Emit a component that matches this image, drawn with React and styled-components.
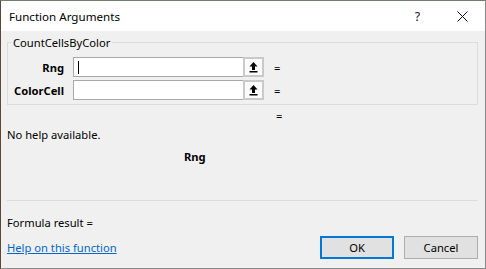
import React from "react";
import styled, { createGlobalStyle } from "styled-components";

const GlobalStyle = createGlobalStyle`
  html, body {
    margin: 0;
    padding: 0;
    background: #ffffff;
  }
  body {
    font-family: "Noto Sans", "Open Sans", sans-serif;
    font-size: 11.2px;
    color: #000000;
  }
`;

const Window = styled.div`
  width: 486px;
  height: 269px;
  box-sizing: border-box;
  border: 1px solid #8a8a8a;
  border-left-color: #5c4636;
  border-top-color: #6f7f6f;
  display: flex;
  flex-direction: column;
  background: #f0f0f0;
  overflow: hidden;
`;

const TitleBar = styled.div`
  height: 30px;
  flex: none;
  background: #ffffff;
  display: flex;
  align-items: center;
  padding-left: 8px;
`;

const Title = styled.div`
  flex: 1;
  font-size: 11.6px;
  color: #000;
`;

const TitleButton = styled.div`
  width: 45px;
  height: 30px;
  display: flex;
  align-items: center;
  justify-content: center;
  font-size: 12.5px;
  color: #222;
`;

const Body = styled.div`
  flex: 1;
  display: flex;
  flex-direction: column;
  padding: 4px 7px 0 6px;
`;

const Group = styled.fieldset`
  margin: 0;
  padding: 7px 0 4px 0;
  border: 1px solid #dcdcdc;
  display: flex;
  flex-direction: column;
  gap: 3px;
`;

const Legend = styled.legend`
  padding: 0 2px;
  margin-left: 3px;
`;

const ArgRow = styled.div`
  display: flex;
  align-items: center;
  height: 20px;
`;

const ArgLabel = styled.label`
  width: 56px;
  text-align: right;
  font-weight: bold;
  margin-right: 9px;
`;

const Field = styled.div`
  width: 170px;
  height: 20px;
  box-sizing: border-box;
  border: 1px solid #a8a8a8;
  border-right: none;
  background: #ffffff;
  display: flex;
  align-items: center;
  padding-left: 4px;
`;

const Caret = styled.span`
  width: 1px;
  height: 13px;
  background: #000;
`;

const CollapseButton = styled.div`
  width: 21px;
  height: 20px;
  box-sizing: border-box;
  border: 2px solid #c9c9c9;
  background: #fbfbfb;
  display: flex;
  align-items: center;
  justify-content: center;
`;

const Equals = styled.span`
  margin-left: ${(p) => p.$offset || 10}px;
`;

const ResultLine = styled.div`
  height: 16px;
  display: flex;
  align-items: center;
  padding-left: ${(p) => p.$indent}px;
  margin-top: ${(p) => p.$top}px;
  font-weight: ${(p) => (p.$bold ? "bold" : "normal")};
`;

const Separator = styled.div`
  height: 1px;
  background: #dcdcdc;
  margin-top: 36px;
`;

const Footer = styled.div`
  display: flex;
  flex-direction: column;
  padding-top: 14px;
`;

const BottomRow = styled.div`
  display: flex;
  align-items: center;
  margin-top: 6px;
`;

const HelpLink = styled.a`
  flex: 1;
  color: #0066cc;
  text-decoration: underline;
  cursor: pointer;
`;

const DialogButton = styled.button`
  width: 74px;
  height: 23px;
  box-sizing: border-box;
  margin-left: ${(p) => p.$gap || 0}px;
  border: ${(p) => (p.$default ? "2px solid #0078d7" : "1px solid #adadad")};
  background: #e1e1e1;
  font-family: inherit;
  font-size: 11.2px;
  color: #000;
  padding: 0;
`;

const UpArrow = () => (
  <svg width="11" height="12" viewBox="0 0 11 12">
    <path d="M5.5 1 L9.5 5.5 L7 5.5 L7 9 L4 9 L4 5.5 L1.5 5.5 Z" fill="#000" />
    <rect x="1.5" y="10" width="8" height="1.5" fill="#000" />
  </svg>
);

const CloseIcon = () => (
  <svg width="11" height="11" viewBox="0 0 11 11">
    <path d="M0.5 0.5 L10.5 10.5 M10.5 0.5 L0.5 10.5" stroke="#111" strokeWidth="1" />
  </svg>
);

const args = [
  { name: "Rng", focused: true },
  { name: "ColorCell", focused: false },
];

export default function App() {
  return (
    <>
      <GlobalStyle />
      <Window>
        <TitleBar>
          <Title>Function Arguments</Title>
          <TitleButton>?</TitleButton>
          <TitleButton>
            <CloseIcon />
          </TitleButton>
        </TitleBar>
        <Body>
          <Group>
            <Legend>CountCellsByColor</Legend>
            {args.map((a) => (
              <ArgRow key={a.name}>
                <ArgLabel>{a.name}</ArgLabel>
                <Field>{a.focused && <Caret />}</Field>
                <CollapseButton>
                  <UpArrow />
                </CollapseButton>
                <Equals>=</Equals>
              </ArgRow>
            ))}
          </Group>
          <ResultLine $indent={269} $top={2}>=</ResultLine>
          <ResultLine $indent={0} $top={3}>No help available.</ResultLine>
          <ResultLine $indent={177} $top={6} $bold>Rng</ResultLine>
          <Separator />
          <Footer>
            <div>Formula result =</div>
            <BottomRow>
              <HelpLink>Help on this function</HelpLink>
              <DialogButton $default>OK</DialogButton>
              <DialogButton $gap={10}>Cancel</DialogButton>
            </BottomRow>
          </Footer>
        </Body>
      </Window>
    </>
  );
}
